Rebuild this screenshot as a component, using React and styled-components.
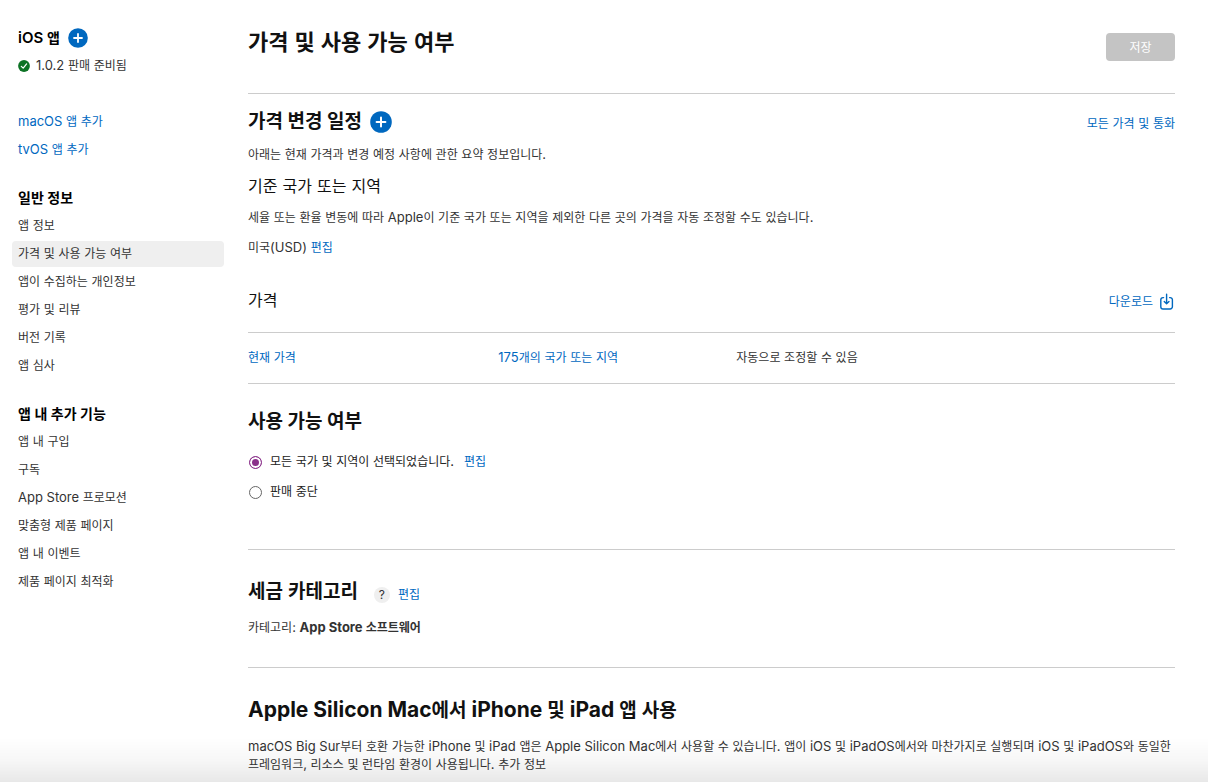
import { useState } from 'react'
import { styled, createGlobalStyle } from 'styled-components'

const GlobalStyle = createGlobalStyle`
  * {
    box-sizing: border-box;
  }

  body {
    margin: 0;
    background: #fff;
    color: #333;
    font-family: Inter, 'Noto Sans CJK KR', sans-serif;
    font-size: 12px;
    line-height: 18px;
    word-break: keep-all;
  }

  h1, h2, h3, p, ul {
    margin: 0;
    padding: 0;
  }

  button {
    font-family: inherit;
  }
`

const Page = styled.div`
  display: flex;
  gap: 24px;
  padding: 0 33px 8px 12px;
`

const Sidebar = styled.nav`
  flex: 0 0 212px;
  display: flex;
  flex-direction: column;
  gap: 22px;
  padding-top: 25px;
`

const NavGroup = styled.div`
  display: flex;
  flex-direction: column;
  gap: 2px;
  margin-top: ${({ $spaced }) => ($spaced ? '8px' : '0')};
`

const NavTitle = styled.h3`
  display: flex;
  align-items: center;
  gap: 8px;
  height: 26px;
  padding: 0 6px;
  color: #000;
  font-size: 14px;
  font-weight: 600;
`

const NavList = styled.ul`
  display: flex;
  flex-direction: column;
  gap: 2px;
  list-style: none;
`

const NavLink = styled.a`
  display: flex;
  align-items: center;
  gap: 6px;
  height: 26px;
  padding: 0 6px;
  border-radius: 4px;
  background: ${({ $active }) => ($active ? '#efefef' : 'transparent')};
  color: ${({ $blue }) => ($blue ? '#0068bf' : '#333')};
  text-decoration: none;
`

const Main = styled.main`
  flex: 1;
  min-width: 0;
`

const Header = styled.header`
  display: flex;
  justify-content: space-between;
  align-items: flex-start;
  padding: 28px 0 32px;
  border-bottom: 1px solid #ccc;
`

const PageTitle = styled.h1`
  color: #111;
  font-size: 22px;
  font-weight: 600;
  line-height: 28px;
`

const SaveButton = styled.button`
  width: 69px;
  height: 28px;
  margin-top: 5px;
  padding: 0 0 2px;
  border: none;
  border-radius: 4px;
  background: #c4c4c4;
  color: #fff;
  font-size: 12px;
`

const Section = styled.section`
  padding: ${({ $padding }) => $padding};
  border-bottom: ${({ $divided }) => ($divided ? '1px solid #ccc' : 'none')};
`

const Row = styled.div`
  display: flex;
  align-items: ${({ $between }) => ($between ? 'baseline' : 'center')};
  justify-content: ${({ $between }) => ($between ? 'space-between' : 'flex-start')};
  gap: ${({ $gap }) => $gap || '8px'};
`

const SectionTitle = styled.h2`
  color: #111;
  font-size: 19px;
  font-weight: 700;
  line-height: 28px;
`

const SubTitle = styled.h3`
  margin-top: ${({ $top }) => $top || '0'};
  color: #111;
  font-size: 16px;
  font-weight: 400;
  line-height: 24px;
`

const Text = styled.p`
  margin-top: ${({ $top }) => $top || '0'};
`

const TextLink = styled.a`
  display: inline-flex;
  align-items: center;
  gap: 6px;
  color: #0068bf;
  text-decoration: none;
`

const AddButton = styled.button`
  display: flex;
  padding: 0;
  border: none;
  background: none;
`

const HelpButton = styled.button`
  width: 16px;
  height: 16px;
  margin-left: 8px;
  padding: 0;
  border: none;
  border-radius: 50%;
  background: #efefef;
  color: #333;
  font-size: 12px;
  line-height: 16px;
`

const TaxHeading = styled.div`
  display: flex;
  align-items: center;
  gap: 8px;

  > :not(h2) {
    margin-top: 6px;
  }
`

const PriceTable = styled.table`
  width: 100%;
  margin-top: 20px;
  border-collapse: separate;
  border-spacing: 0;
  border-top: 1px solid #ccc;
  border-bottom: 1px solid #ccc;
  table-layout: fixed;

  td {
    height: 50px;
    padding: 0;
  }
`

const Options = styled.div`
  display: flex;
  flex-direction: column;
  gap: 12px;
  margin-top: 17px;
`

const RadioLabel = styled.label`
  display: flex;
  align-items: center;
  gap: 7px;
  color: #222;
`

const Radio = styled.input`
  appearance: none;
  width: 13px;
  height: 13px;
  margin: 0 1px;
  border: 1px solid #666;
  border-radius: 50%;
  background: #fff;

  &:checked {
    border-color: #8b318b;
    background: #8b318b;
    box-shadow: inset 0 0 0 2px #fff;
  }
`

const BottomFade = styled.div`
  position: fixed;
  left: 0;
  right: 0;
  bottom: 0;
  height: 44px;
  background: linear-gradient(rgba(0, 0, 0, 0), rgba(0, 0, 0, 0.03) 50%, rgba(0, 0, 0, 0.09));
  pointer-events: none;
`

const Latin = styled.span`
  font-size: ${({ $size }) => $size}px;
  line-height: 1;
`

// Latin letters, digits and spaces are set slightly larger than the Hangul
const Mixed = ({ children, size = 13 }) => (
  <span>
    {children.split(/([^\u3131-\uD79D]+)/).map((part, i) =>
      i % 2 ? (
        <Latin key={i} $size={size}>
          {part}
        </Latin>
      ) : (
        part
      ),
    )}
  </span>
)

const PlusIcon = ({ size }) => (
  <svg width={size} height={size} viewBox="0 0 22 22" aria-hidden="true">
    <circle cx="11" cy="11" r="10.8" fill="#0068bf" />
    <path d="M11 6.6v8.8M6.6 11h8.8" stroke="#fff" strokeWidth="2" strokeLinecap="round" />
  </svg>
)

const ReadyIcon = () => (
  <svg width="12" height="12" viewBox="0 0 12 12" aria-hidden="true">
    <circle cx="6" cy="6" r="5.9" fill="#0d7325" />
    <path
      d="M3.3 6.3l1.9 1.9 3.4-4.3"
      fill="none"
      stroke="#fff"
      strokeWidth="1.2"
      strokeLinecap="round"
      strokeLinejoin="round"
    />
  </svg>
)

const DownloadIcon = () => (
  <svg width="16" height="18" viewBox="0 0 16 18" aria-hidden="true">
    <g fill="none" stroke="#0068bf" strokeWidth="1.4" strokeLinecap="round" strokeLinejoin="round">
      <path d="M4.6 4.6H4a2.2 2.2 0 0 0-2.2 2.2v7A2.2 2.2 0 0 0 4 16h7.2a2.2 2.2 0 0 0 2.2-2.2v-7a2.2 2.2 0 0 0-2.2-2.2h-.6" />
      <path d="M7.6 1.2v9.4M5.2 8.6l2.4 2.2L10 8.6" />
    </g>
  </svg>
)

const general = [
  '앱 정보',
  '가격 및 사용 가능 여부',
  '앱이 수집하는 개인정보',
  '평가 및 리뷰',
  '버전 기록',
  '앱 심사',
]

const features = [
  '앱 내 구입',
  '구독',
  'App Store 프로모션',
  '맞춤형 제품 페이지',
  '앱 내 이벤트',
  '제품 페이지 최적화',
]

const NavItems = ({ items, active, blue }) => (
  <NavList>
    {items.map((item) => (
      <li key={item}>
        <NavLink href="#" $active={item === active} $blue={blue}>
          <Mixed>{item}</Mixed>
        </NavLink>
      </li>
    ))}
  </NavList>
)

export default function App() {
  const [availability, setAvailability] = useState('all')

  return (
    <>
      <GlobalStyle />
      <Page>
        <Sidebar>
          <NavGroup>
            <NavTitle>
              <Mixed size={15}>iOS 앱</Mixed>
              <AddButton aria-label="버전 추가">
                <PlusIcon size={20} />
              </AddButton>
            </NavTitle>
            <NavLink href="#">
              <ReadyIcon />
              <Mixed>1.0.2 판매 준비됨</Mixed>
            </NavLink>
          </NavGroup>
          <NavGroup $spaced>
            <NavItems items={['macOS 앱 추가', 'tvOS 앱 추가']} blue />
          </NavGroup>
          <NavGroup>
            <NavTitle>일반 정보</NavTitle>
            <NavItems items={general} active="가격 및 사용 가능 여부" />
          </NavGroup>
          <NavGroup>
            <NavTitle>앱 내 추가 기능</NavTitle>
            <NavItems items={features} />
          </NavGroup>
        </Sidebar>

        <Main>
          <Header>
            <PageTitle>
              <Mixed size={24}>가격 및 사용 가능 여부</Mixed>
            </PageTitle>
            <SaveButton disabled>저장</SaveButton>
          </Header>

          <Section $padding="14px 0 0">
            <Row $between>
              <Row>
                <SectionTitle>가격 변경 일정</SectionTitle>
                <AddButton aria-label="가격 변경 추가">
                  <PlusIcon size={22} />
                </AddButton>
              </Row>
              <TextLink href="#">
                <Mixed>모든 가격 및 통화</Mixed>
              </TextLink>
            </Row>
            <Text $top="10px">
              <Mixed>아래는 현재 가격과 변경 예정 사항에 관한 요약 정보입니다.</Mixed>
            </Text>
            <SubTitle $top="10px">
              <Mixed size={18}>기준 국가 또는 지역</Mixed>
            </SubTitle>
            <Text $top="11px">
              <Mixed>
                세율 또는 환율 변동에 따라 Apple이 기준 국가 또는 지역을 제외한 다른 곳의 가격을 자동 조정할 수도
                있습니다.
              </Mixed>
            </Text>
            <Text $top="12px">
              <Mixed>미국(USD) </Mixed>
              <TextLink href="#">편집</TextLink>
            </Text>
          </Section>

          <Section $padding="31px 0 0">
            <Row $between>
              <SubTitle>가격</SubTitle>
              <TextLink href="#">
                다운로드
                <DownloadIcon />
              </TextLink>
            </Row>
            <PriceTable>
              <colgroup>
                <col width="27%" />
                <col width="238" />
                <col />
              </colgroup>
              <tbody>
                <tr>
                  <td>
                    <TextLink href="#">
                      <Mixed>현재 가격</Mixed>
                    </TextLink>
                  </td>
                  <td>
                    <TextLink href="#">
                      <Mixed>175개의 국가 또는 지역</Mixed>
                    </TextLink>
                  </td>
                  <td>
                    <Mixed>자동으로 조정할 수 있음</Mixed>
                  </td>
                </tr>
              </tbody>
            </PriceTable>
          </Section>

          <Section $padding="24px 0 48px" $divided>
            <SectionTitle>사용 가능 여부</SectionTitle>
            <Options>
              <Row $gap="10px">
                <RadioLabel>
                  <Radio
                    type="radio"
                    name="availability"
                    checked={availability === 'all'}
                    onChange={() => setAvailability('all')}
                  />
                  <Mixed>모든 국가 및 지역이 선택되었습니다.</Mixed>
                </RadioLabel>
                <TextLink href="#">편집</TextLink>
              </Row>
              <RadioLabel>
                <Radio
                  type="radio"
                  name="availability"
                  checked={availability === 'removed'}
                  onChange={() => setAvailability('removed')}
                />
                <Mixed>판매 중단</Mixed>
              </RadioLabel>
            </Options>
          </Section>

          <Section $padding="28px 0 30px" $divided>
            <TaxHeading>
              <SectionTitle>
                <Mixed size={21}>세금 카테고리</Mixed>
              </SectionTitle>
              <HelpButton aria-label="도움말">?</HelpButton>
              <TextLink href="#">편집</TextLink>
            </TaxHeading>
            <Text $top="13px">
              <Mixed>카테고리: </Mixed>
              <b>
                <Mixed>App Store 소프트웨어</Mixed>
              </b>
            </Text>
          </Section>

          <Section $padding="29px 0 0">
            <SectionTitle>
              <Mixed size={21}>Apple Silicon Mac에서 iPhone 및 iPad 앱 사용</Mixed>
            </SectionTitle>
            <Text $top="13px">
              <Mixed>
                macOS Big Sur부터 호환 가능한 iPhone 및 iPad 앱은 Apple Silicon Mac에서 사용할 수 있습니다. 앱이 iOS 및
                iPadOS에서와 마찬가지로 실행되며 iOS 및 iPadOS와 동일한 프레임워크, 리소스 및 런타임 환경이 사용됩니다.
                추가 정보
              </Mixed>
            </Text>
          </Section>
        </Main>
      </Page>
      <BottomFade />
    </>
  )
}
